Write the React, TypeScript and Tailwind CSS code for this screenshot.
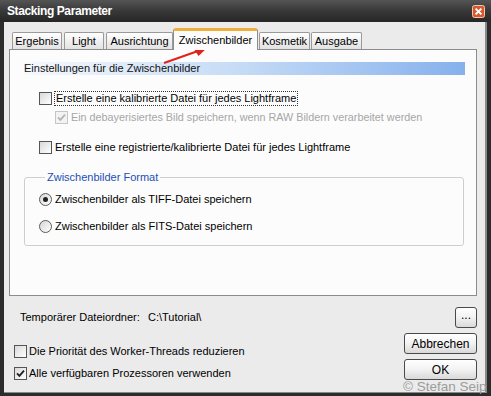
import clsx from "clsx";

function Box({ checked = false, disabled = false }: { checked?: boolean; disabled?: boolean }) {
  return (
    <span
      className={clsx(
        "flex h-[13px] w-[13px] shrink-0 items-center justify-center border",
        disabled
          ? "border-[#c6c6c6] bg-[#f3f3f3]"
          : "border-[#555] bg-linear-to-br from-[#d9d9d9] to-white"
      )}
    >
      {checked && (
        <svg width="9" height="9" viewBox="0 0 9 9">
          <path
            d="M1 4.3 L3.4 6.8 L8 1.6"
            fill="none"
            stroke={disabled ? "#b4b4b4" : "#222"}
            strokeWidth="1.8"
          />
        </svg>
      )}
    </span>
  );
}

function Radio({ checked = false }: { checked?: boolean }) {
  return (
    <span className="flex h-[13px] w-[13px] shrink-0 items-center justify-center rounded-full border border-[#5a5a5a] bg-linear-to-br from-[#d6d6d6] to-white">
      {checked && <span className="h-[5px] w-[5px] rounded-full bg-[#222]" />}
    </span>
  );
}

function Btn({ label, className }: { label: string; className?: string }) {
  return (
    <div
      className={clsx(
        "flex items-center justify-center rounded-[3px] border border-[#4a4a4a] bg-linear-to-b from-white via-[#f2f2f2] to-[#d9d9d9] text-[12px] text-black",
        className
      )}
    >
      {label}
    </div>
  );
}

const tabs = [
  { name: "Ergebnis", w: "w-[50px]", ml: "ml-[3px]" },
  { name: "Light", w: "w-[40px]", ml: "ml-[2px]" },
  { name: "Ausrichtung", w: "w-[67px]", ml: "ml-[2px]" },
  { name: "Zwischenbilder", w: "w-[85px]", ml: "ml-0", active: true },
  { name: "Kosmetik", w: "w-[51px]", ml: "ml-[1px]" },
  { name: "Ausgabe", w: "w-[51px]", ml: "ml-[1px]" },
];

export default function App() {
  return (
    <div className="relative flex h-[396px] w-[491px] flex-col overflow-hidden bg-[#2c2c2c] font-['Liberation_Sans',Arial,sans-serif] text-[11px] text-black">
      {/* Titelleiste */}
      <div className="flex h-[22px] shrink-0 items-center justify-between bg-linear-to-b from-[#555] via-[#383838] to-[#262626] pl-[7px] pr-[6px]">
        <span className="text-[12px] font-bold tracking-[-0.4px] text-white">Stacking Parameter</span>
        <svg width="13" height="13" viewBox="0 0 13 13" className="mt-[1px]">
          <rect x="0.5" y="0.5" width="12" height="12" rx="2" fill="#d8582f" stroke="#f2c6b4" />
          <path d="M3.6 3.6 L9.4 9.4 M9.4 3.6 L3.6 9.4" stroke="white" strokeWidth="2" />
        </svg>
      </div>

      {/* Fensterinhalt */}
      <div className="flex flex-1 flex-col border-b-[3px] border-l-[4px] border-r-[4px] border-[#2c2c2c] bg-[#ebebeb] shadow-[inset_0_-1px_0_#8a8a8a,inset_-2px_0_0_#8a8a8a]">
        <div className="pl-[5px] pr-[10px] pt-[6px]">
          {/* Tabs */}
          <div className="flex h-[21px] items-start">
            {tabs.map((t) =>
              t.active ? (
                <div
                  key={t.name}
                  className={clsx(
                    "relative z-10 flex h-[22px] items-start justify-center rounded-t-[3px] border-x border-t-[3px] border-x-[#8c8c8c] border-t-[#f0ad3a] bg-[#fcfcfc] pt-[1px]",
                    t.w,
                    t.ml
                  )}
                >
                  {t.name}
                </div>
              ) : (
                <div
                  key={t.name}
                  className={clsx(
                    "mt-[4px] flex h-[17px] items-center justify-center rounded-t-[2px] border border-b-0 border-[#9a9a9a] bg-linear-to-b from-white to-[#e2e2e2]",
                    t.w,
                    t.ml
                  )}
                >
                  {t.name}
                </div>
              )
            )}
          </div>

          {/* Panel */}
          <div className="flex h-[247px] flex-col border border-[#8c8c8c] bg-[#fcfcfc] pl-[14px] pr-[11px] pt-[12px]">
            <div className="flex h-[13px] items-center bg-linear-to-r from-[#f6f9fd] via-[#c4daf5] to-[#86b1ec] text-[#111]">
              Einstellungen für die Zwischenbilder
            </div>

            <div className="ml-[15px] mt-[16px] flex h-[15px] items-center">
              <Box />
              <span className="ml-[2px] border border-dotted border-[#333] px-[1px] leading-[13px]">
                Erstelle eine kalibrierte Datei für jedes Lightframe
              </span>
            </div>

            <div className="ml-[31px] mt-[4px] flex h-[15px] items-center text-[10.8px] text-[#a6a6a6]">
              <Box checked disabled />
              <span className="ml-[3px]">Ein debayerisiertes Bild speichern, wenn RAW Bildern verarbeitet werden</span>
            </div>

            <div className="ml-[15px] mt-[15px] flex h-[15px] items-center">
              <Box />
              <span className="ml-[3px]">Erstelle eine registrierte/kalibrierte Datei für jedes Lightframe</span>
            </div>

            <fieldset className="mr-[1px] mt-[14px] h-[77px] rounded-[3px] border border-[#d0d0ca] pl-[14px]">
              <legend className="ml-[6px] px-[2px] text-[#1d4fb6]">Zwischenbilder Format</legend>
              <div className="mt-[6px] flex h-[15px] items-center">
                <Radio checked />
                <span className="ml-[3px]">Zwischenbilder als TIFF-Datei speichern</span>
              </div>
              <div className="mt-[12px] flex h-[15px] items-center">
                <Radio />
                <span className="ml-[3px]">Zwischenbilder als FITS-Datei speichern</span>
              </div>
            </fieldset>
          </div>

          {/* Dateiordner */}
          <div className="mt-[11px] flex h-[20px] items-center pl-[11px]">
            <span className="w-[128px] whitespace-nowrap">Temporärer Dateiordner:</span>
            <span className="whitespace-nowrap">C:\Tutorial\</span>
            <Btn label="..." className="ml-auto h-[21px] w-[22px] pb-[4px]" />
          </div>

          <div className="mt-[6px] flex">
            <div className="flex flex-col gap-[9px] pl-[5px] pt-[12px]">
              <div className="flex h-[13px] items-center">
                <Box />
                <span className="ml-[2px]">Die Priorität des Worker-Threads reduzieren</span>
              </div>
              <div className="flex h-[13px] items-center">
                <Box checked />
                <span className="ml-[2px]">Alle verfügbaren Prozessoren verwenden</span>
              </div>
            </div>
            <div className="ml-auto flex flex-col gap-[5px]">
              <Btn label="Abbrechen" className="h-[21px] w-[73px]" />
              <Btn label="OK" className="h-[21px] w-[73px]" />
            </div>
          </div>
        </div>
      </div>

      {/* Wasserzeichen */}
      <span className="absolute left-[403px] top-[379px] text-[13.5px] leading-[16px] text-[#9c9c9c]">© Stefan Seip</span>

      {/* roter Pfeil */}
      <svg className="pointer-events-none absolute left-0 top-0" width="491" height="396">
        <path d="M164 63 L198 51" stroke="#e3211b" strokeWidth="2" fill="none" />
        <path d="M208 47 L193 47.5 L198.5 56 Z" fill="#e3211b" />
      </svg>
    </div>
  );
}
